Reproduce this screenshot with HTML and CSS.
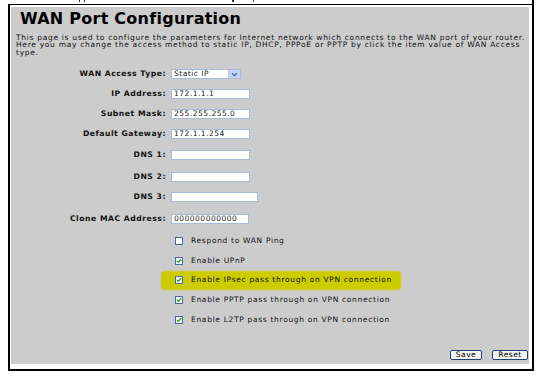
FILE: index.html
```html
<!DOCTYPE html>
<html>
<head>
<meta charset="utf-8">
<title>WAN Port Configuration</title>
<link rel="stylesheet" href="styles.css">
</head>
<body>
<div class="sheet">
  <div class="marks"><i class="mk mk1"></i><i class="mk mk2"></i><i class="mk mk3"></i><i class="mk mk4"></i></div>
  <div class="frame">
    <div class="panel">
      <h1 class="title">WAN Port Configuration</h1>
      <p class="desc">This page is used to configure the parameters for Internet network which connects to the WAN port of your router.<br>Here you may change the access method to static IP, DHCP, PPPoE or PPTP by click the item value of WAN Access<br>type.</p>
      <div class="form">
        <span class="lbl">WAN Access Type:</span>
        <div class="select"><span class="sel-text">Static IP</span><span class="sel-btn"><svg width="7" height="5" viewBox="0 0 7 5"><path d="M1 1.2 L3.5 3.6 L6 1.2" fill="none" stroke="#4d6185" stroke-width="1.2"/></svg></span></div>

        <span class="lbl">IP Address:</span>
        <div class="field w79">172.1.1.1</div>

        <span class="lbl">Subnet Mask:</span>
        <div class="field w79">255.255.255.0</div>

        <span class="lbl">Default Gateway:</span>
        <div class="field w79">172.1.1.254</div>

        <span class="lbl">DNS 1:</span>
        <div class="field w79"></div>

        <span class="lbl">DNS 2:</span>
        <div class="field w79"></div>

        <span class="lbl">DNS 3:</span>
        <div class="field w87"></div>

        <span class="lbl">Clone MAC Address:</span>
        <div class="field w78">000000000000</div>
      </div>

      <div class="checks">
        <div class="crow"><span class="cb"></span><span class="ctext">Respond to WAN Ping</span></div>
        <div class="crow"><span class="cb"><svg class="tick" width="6" height="6" viewBox="0 0 6 6"><path d="M0.8 2.8 L2.4 4.4 L5.2 1.2" fill="none" stroke="#21a121" stroke-width="1.3"/></svg></span><span class="ctext">Enable UPnP</span></div>
        <div class="crow"><div class="hl"><span class="cb"><svg class="tick" width="6" height="6" viewBox="0 0 6 6"><path d="M0.8 2.8 L2.4 4.4 L5.2 1.2" fill="none" stroke="#21a121" stroke-width="1.3"/></svg></span><span class="ctext">Enable IPsec pass through on VPN connection</span></div></div>
        <div class="crow"><span class="cb"><svg class="tick" width="6" height="6" viewBox="0 0 6 6"><path d="M0.8 2.8 L2.4 4.4 L5.2 1.2" fill="none" stroke="#21a121" stroke-width="1.3"/></svg></span><span class="ctext">Enable PPTP pass through on VPN connection</span></div>
        <div class="crow"><span class="cb"><svg class="tick" width="6" height="6" viewBox="0 0 6 6"><path d="M0.8 2.8 L2.4 4.4 L5.2 1.2" fill="none" stroke="#21a121" stroke-width="1.3"/></svg></span><span class="ctext">Enable L2TP pass through on VPN connection</span></div>
      </div>

      <div class="buttons">
        <span class="btn btn-save">Save</span>
        <span class="btn btn-reset">Reset</span>
      </div>
    </div>
  </div>
</div>
</body>
</html>
```
FILE: styles.css
```css
html, body {
  margin: 0;
  padding: 0;
  background: #ffffff;
}
body {
  font-family: "DejaVu Sans", Verdana, sans-serif;
  color: #000;
}
.sheet {
  margin-left: 8px;
  width: 524px;
  height: 369px;
  border-right: 2px solid #000;
  border-bottom: 2px solid #000;
}
.marks {
  height: 4px;
  display: flex;
  align-items: flex-start;
}
.mk {
  display: block;
  width: 1px;
  height: 2px;
  background: #1a2a6a;
}
.mk1 { margin-left: 71px; }
.mk2 { margin-left: 4px; }
.mk3 { margin-left: 147px; width: 2px; }
.mk4 { margin-left: 19px; background: #d02020; }
.frame {
  border-top: 1px solid #000;
  border-left: 2px solid #000;
  padding: 2px 3px 5px 1px;
}
.panel {
  background: #cccccc;
  height: 357px;
  display: flex;
  flex-direction: column;
}
.title {
  margin: 4px 0 0 9px;
  font-size: 16px;
  line-height: 16.5px;
  font-weight: bold;
  letter-spacing: 0.25px;
}
.desc {
  margin: 6px 0 0 5px;
  font-size: 7.5px;
  line-height: 7.5px;
  letter-spacing: 0.7px;
  color: #111;
}
.form {
  margin-top: 13px;
  display: grid;
  grid-template-columns: 155px auto;
  column-gap: 5px;
  grid-template-rows: 20px 20px 20px 21px 22px 20px 22px 17px;
  align-items: start;
  justify-items: start;
}
.lbl {
  justify-self: end;
  font-size: 7.7px;
  font-weight: bold;
  line-height: 10px;
  letter-spacing: 0.5px;
  white-space: nowrap;
  color: #111;
}
.field {
  box-sizing: border-box;
  height: 10px;
  background: #fff;
  border: 1px solid #a9bcd6;
  font-size: 7.5px;
  line-height: 8px;
  padding: 0 2px;
  color: #222;
  letter-spacing: 0.5px;
}
.w79 { width: 79px; }
.w87 { width: 87px; }
.w78 { width: 78px; }
.select {
  box-sizing: border-box;
  width: 70px;
  height: 10px;
  background: #fff;
  border: 1px solid #a9bcd6;
  display: flex;
  align-items: stretch;
  justify-content: space-between;
}
.sel-text {
  font-size: 7.5px;
  line-height: 8px;
  padding-left: 2px;
  color: #222;
  letter-spacing: 0.5px;
}
.sel-btn {
  width: 11px;
  background: #c4d4f8;
  border-left: 1px solid #b7c8ee;
  display: flex;
  align-items: center;
  justify-content: center;
}
.checks {
  display: flex;
  flex-direction: column;
}
.crow {
  height: 19.75px;
  display: flex;
  align-items: center;
  padding-left: 164px;
}
.cb {
  box-sizing: border-box;
  width: 8px;
  height: 8px;
  background: #fff;
  border: 1px solid #4a6a9c;
  display: flex;
  align-items: center;
  justify-content: center;
  flex: none;
}
.ctext {
  margin-left: 8px;
  font-size: 7.5px;
  line-height: 10px;
  letter-spacing: 0.68px;
  white-space: nowrap;
  color: #111;
}
.hl {
  margin-left: -13px;
  padding-left: 13px;
  width: 225px;
  height: 17px;
  display: flex;
  align-items: center;
  background: #cccc00;
  border-radius: 3px;
  box-shadow: 0 0 2px 1px #cccc00;
}
.buttons {
  margin-top: 20px;
  display: flex;
  justify-content: flex-end;
  gap: 10px;
  padding-right: 1px;
}
.btn {
  box-sizing: border-box;
  height: 10px;
  border: 1px solid #1f3f78;
  border-radius: 2px;
  background: #f4f4f0;
  font-size: 7.5px;
  line-height: 8px;
  text-align: center;
  letter-spacing: 0.5px;
}
.btn-save { width: 32px; }
.btn-reset { width: 36px; }
```
